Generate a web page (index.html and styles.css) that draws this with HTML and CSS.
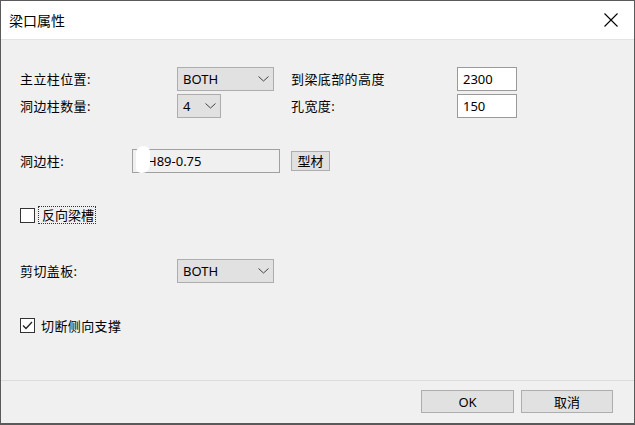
FILE: index.html
```html
<!DOCTYPE html>
<html lang="zh">
<head>
    <meta charset="UTF-8">
    <title>梁口属性</title>
    <link rel="stylesheet" href="styles.css">
</head>
<body>

<div class="window">
    <div class="titlebar">
        <span class="title">梁口属性</span>
        <span class="close">
            <svg width="14" height="14" viewBox="0 0 14 14"><path d="M0.5 0.5 L13.5 13.5 M13.5 0.5 L0.5 13.5" stroke="#000" stroke-width="1.1" fill="none"/></svg>
        </span>
    </div>

    <div class="content">
        <div class="grid">
            <span class="label">主立柱位置:</span>
            <div class="combo wide"><span>BOTH</span><svg class="chev" width="11" height="6" viewBox="0 0 11 6"><polyline points="0.5,0.5 5.5,5 10.5,0.5" fill="none" stroke="#444" stroke-width="1"/></svg></div>
            <span class="label">到梁底部的高度</span>
            <div class="textbox">2300</div>

            <span class="label">洞边柱数量:</span>
            <div class="combo narrow"><span>4</span><svg class="chev" width="11" height="6" viewBox="0 0 11 6"><polyline points="0.5,0.5 5.5,5 10.5,0.5" fill="none" stroke="#444" stroke-width="1"/></svg></div>
            <span class="label">孔宽度:</span>
            <div class="textbox">150</div>
        </div>

        <div class="row profile-row">
            <span class="label profile-label">洞边柱:</span>
            <div class="readonly">
                <span class="blot"></span>
                <span>H89-0.75</span>
            </div>
            <button class="small-btn">型材</button>
        </div>

        <div class="row check-row first-check">
            <span class="check"></span>
            <span class="focus">反向梁槽</span>
        </div>

        <div class="row plate-row">
            <span class="label plate-label">剪切盖板:</span>
            <div class="combo wide"><span>BOTH</span><svg class="chev" width="11" height="6" viewBox="0 0 11 6"><polyline points="0.5,0.5 5.5,5 10.5,0.5" fill="none" stroke="#444" stroke-width="1"/></svg></div>
        </div>

        <div class="row check-row second-check">
            <span class="check">
                <svg width="13" height="13" viewBox="0 0 13 13"><polyline points="2,6.5 5,9.5 11,3" fill="none" stroke="#222" stroke-width="1.3"/></svg>
            </span>
            <span class="check-text">切断侧向支撑</span>
        </div>
    </div>

    <div class="footer">
        <button class="btn ok">OK</button>
        <button class="btn">取消</button>
    </div>
</div>

</body>
</html>
```

FILE: styles.css
```css
* {
    margin: 0;
    padding: 0;
    box-sizing: border-box;
}

body {
    font-family: "Noto Sans", "Noto Sans CJK SC", sans-serif;
    font-size: 13px;
    color: #000;
    background-color: #f0f0f0;
}

.window {
    width: 635px;
    height: 425px;
    border: 1px solid #5a5a5a;
    border-bottom-width: 2px;
    background: #f0f0f0;
    display: flex;
    flex-direction: column;
}

.titlebar {
    height: 39px;
    background: #fff;
    border-bottom: 1px solid #e3e3e3;
    display: flex;
    align-items: center;
    justify-content: space-between;
    padding-left: 8px;
}

.title {
    font-size: 14px;
}

.close {
    width: 46px;
    height: 38px;
    display: flex;
    align-items: center;
    justify-content: center;
}

.content {
    flex: 1;
    padding: 27px 0 0 19px;
}

.label {
    font-size: 13px;
    line-height: 18px;
    letter-spacing: 0.4px;
}

.grid {
    display: grid;
    grid-template-columns: 157px 114px 166px 60px;
    grid-auto-rows: 24px;
    row-gap: 3px;
    align-items: center;
}

.combo {
    height: 24px;
    background: #e1e1e1;
    border: 1px solid #adadad;
    display: flex;
    align-items: center;
    justify-content: space-between;
    padding: 0 4px 0 5px;
    font-size: 13px;
}

.combo.wide {
    width: 97px;
}

.combo.narrow {
    width: 44px;
}

.textbox {
    width: 60px;
    height: 24px;
    background: #fff;
    border: 1px solid #9a9a9a;
    padding-left: 5px;
    display: flex;
    align-items: center;
    font-size: 13px;
}

.row {
    display: flex;
    align-items: center;
}

.profile-row {
    margin-top: 31px;
    height: 24px;
}

.profile-label {
    width: 112px;
}

.readonly {
    position: relative;
    width: 148px;
    height: 24px;
    border: 1px solid #a0a0a0;
    background: #f0f0f0;
    display: flex;
    align-items: center;
    padding-left: 14px;
    font-size: 13px;
}

.blot {
    position: absolute;
    left: 3px;
    top: -4px;
    width: 14px;
    height: 27px;
    background: #fff;
    border-radius: 7px 6px 8px 5px;
}

.small-btn {
    margin-left: 11px;
    width: 39px;
    height: 20px;
    background: #e1e1e1;
    border: 1px solid #adadad;
    font-family: inherit;
    font-size: 13px;
    line-height: 16px;
}

.check-row {
    height: 18px;
}

.first-check {
    margin-top: 33px;
}

.second-check {
    margin-top: 33px;
}

.check {
    width: 15px;
    height: 15px;
    border: 1px solid #333;
    background: #fff;
    display: flex;
    align-items: center;
    justify-content: center;
}

.focus {
    margin-left: 3px;
    height: 18px;
    border: 1px dotted #333;
    padding: 0 1px 0 3px;
    line-height: 16px;
}

.check-text {
    margin-left: 6px;
    letter-spacing: 0.4px;
}

.plate-row {
    margin-top: 35px;
    height: 24px;
}

.plate-label {
    width: 157px;
}

.footer {
    height: 43px;
    border-top: 1px solid #dcdcdc;
    display: flex;
    justify-content: flex-end;
    gap: 7px;
    padding: 9px 21px 0 0;
}

.btn {
    width: 92px;
    height: 23px;
    background: #e1e1e1;
    border: 1px solid #adadad;
    font-family: inherit;
    font-size: 13px;
}

.btn.ok {
    width: 93px;
}
```
